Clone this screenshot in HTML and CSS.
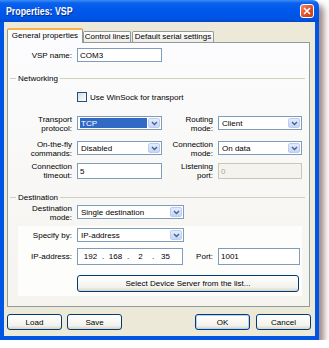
FILE: index.html
```html
<!DOCTYPE html>
<html lang="en">
<head>
  <meta charset="UTF-8">
  <title>Properties: VSP</title>
  <link rel="stylesheet" href="styles.css">
</head>
<body>
  <div class="window">
    <div class="titlebar">
      <span class="title">Properties: VSP</span>
      <span class="close">
        <svg width="8" height="8" viewBox="0 0 8 8"><path d="M1 1 L7 7 M7 1 L1 7" stroke="#fff" stroke-width="1.6"/></svg>
      </span>
    </div>
    <div class="client">
      <div class="tabs">
        <div class="tab active">General properties</div>
        <div class="tab">Control lines</div>
        <div class="tab">Default serial settings</div>
      </div>
      <div class="page">
        <div class="row name-row">
          <div class="lbl">VSP name:</div>
          <div class="edit w85">COM3</div>
        </div>

        <div class="group"><span>Networking</span></div>

        <div class="row check-row">
          <span class="check"></span>
          <span>Use WinSock for transport</span>
        </div>

        <div class="row pair first">
          <div class="lbl">Transport<br>protocol:</div>
          <div class="combo w85"><span class="val sel">TCP</span><span class="drop"><svg width="7" height="5" viewBox="0 0 7 5"><path d="M1 1 L3.5 3.5 L6 1" fill="none" stroke="#4d6185" stroke-width="1.4"/></svg></span></div>
          <div class="lbl rl">Routing<br>mode:</div>
          <div class="combo w84"><span class="val">Client</span><span class="drop"><svg width="7" height="5" viewBox="0 0 7 5"><path d="M1 1 L3.5 3.5 L6 1" fill="none" stroke="#4d6185" stroke-width="1.4"/></svg></span></div>
        </div>

        <div class="row pair">
          <div class="lbl">On-the-fly<br>commands:</div>
          <div class="combo w85"><span class="val">Disabled</span><span class="drop"><svg width="7" height="5" viewBox="0 0 7 5"><path d="M1 1 L3.5 3.5 L6 1" fill="none" stroke="#4d6185" stroke-width="1.4"/></svg></span></div>
          <div class="lbl rl">Connection<br>mode:</div>
          <div class="combo w84"><span class="val">On data</span><span class="drop"><svg width="7" height="5" viewBox="0 0 7 5"><path d="M1 1 L3.5 3.5 L6 1" fill="none" stroke="#4d6185" stroke-width="1.4"/></svg></span></div>
        </div>

        <div class="row pair tall">
          <div class="lbl">Connection<br>timeout:</div>
          <div class="edit w85">5</div>
          <div class="lbl rl">Listening<br>port:</div>
          <div class="edit w84 disabled">0</div>
        </div>

        <div class="group dest"><span>Destination</span></div>

        <div class="row pair mode-row">
          <div class="lbl">Destination<br>mode:</div>
          <div class="combo w107"><span class="val">Single destination</span><span class="drop"><svg width="7" height="5" viewBox="0 0 7 5"><path d="M1 1 L3.5 3.5 L6 1" fill="none" stroke="#4d6185" stroke-width="1.4"/></svg></span></div>
        </div>

        <div class="subpanel">
          <div class="row">
            <div class="lbl sub">Specify by:</div>
            <div class="combo w107"><span class="val">IP-address</span><span class="drop"><svg width="7" height="5" viewBox="0 0 7 5"><path d="M1 1 L3.5 3.5 L6 1" fill="none" stroke="#4d6185" stroke-width="1.4"/></svg></span></div>
          </div>
          <div class="row ip-row">
            <div class="lbl sub">IP-address:</div>
            <div class="edit ip">
              <span class="seg">192</span><span class="dot">.</span>
              <span class="seg">168</span><span class="dot">.</span>
              <span class="seg">2</span><span class="dot">.</span>
              <span class="seg">35</span>
            </div>
            <div class="lbl port">Port:</div>
            <div class="edit w82">1001</div>
          </div>
          <div class="btn wide">Select Device Server from the list...</div>
        </div>
      </div>

      <div class="buttons">
        <div class="btn-group">
          <div class="btn">Load</div>
          <div class="btn">Save</div>
        </div>
        <div class="btn-group">
          <div class="btn default">OK</div>
          <div class="btn">Cancel</div>
        </div>
      </div>
    </div>
  </div>
</body>
</html>
```

FILE: styles.css
```css
* {
  box-sizing: border-box;
}
body {
  margin: 0;
  background: #fff;
  font-family: "Liberation Sans", Arial, sans-serif;
  font-size: 8px;
  color: #000;
}
.window {
  width: 319px;
  height: 340px;
  display: flex;
  flex-direction: column;
  border-radius: 0 6px 0 0;
  box-shadow: 5px 5px 6px rgba(80, 40, 40, 0.55);
}
.titlebar {
  height: 22px;
  display: flex;
  align-items: center;
  justify-content: space-between;
  padding: 0 5px 0 6px;
  border-radius: 0 6px 0 0;
  background: linear-gradient(#3d8df7 0, #0a62ec 3px, #0058ee 45%, #0054e3 85%, #0047cf 100%);
}
.title {
  color: #fff;
  font-weight: bold;
  font-size: 11px;
  text-shadow: 1px 1px 0 #0a2a8a;
  display: inline-block;
  transform: scaleX(0.8);
  transform-origin: left center;
}
.close {
  width: 14px;
  height: 14px;
  border: 1px solid #fff;
  border-radius: 3px;
  background: linear-gradient(135deg, #f08a6a, #e0512a 50%, #c83c14);
  display: flex;
  align-items: center;
  justify-content: center;
}
.client {
  flex: 1;
  background: #ece9d8;
  border: 4px solid #0055e5;
  border-top: 0;
  padding: 5px 4px 0 3px;
  display: flex;
  flex-direction: column;
}
.tabs {
  height: 15px;
  display: flex;
  align-items: flex-end;
}
.tab {
  height: 11px;
  padding: 0;
  border: 1px solid #919b9c;
  border-bottom: 0;
  border-radius: 2px 2px 0 0;
  background: linear-gradient(#fff, #ecebe6);
  line-height: 10px;
  margin-right: 1px;
  white-space: nowrap;
  text-align: center;
}
.tab.active {
  height: 15px;
  border-top: 2px solid #f7b34a;
  background: #fcfcfe;
  line-height: 12px;
  position: relative;
  top: 1px;
  z-index: 1;
}
.tabs .tab:nth-child(2) { width: 48px; }
.tabs .tab:nth-child(3) { width: 82px; }
.tabs .tab.active { width: 76px; margin-right: 0; }
.page {
  width: 303px;
  height: 265px;
  border: 1px solid #919b9c;
  background: linear-gradient(#fcfcfe, #f4f3ee);
  padding-top: 5px;
}
.row {
  display: flex;
  align-items: center;
}
.lbl {
  width: 69px;
  padding-right: 5px;
  text-align: right;
  line-height: 9px;
}
.lbl.rl {
  width: 56px;
}
.lbl.sub {
  width: 59px;
}
.lbl.port {
  width: 35px;
}
.edit, .combo {
  height: 14px;
  border: 1px solid #7f9db9;
  background: #fff;
  padding-left: 2px;
  display: flex;
  align-items: center;
}
.w85 { width: 85px; }
.w84 { width: 84px; }
.w82 { width: 82px; }
.w107 { width: 107px; }
.edit.disabled {
  background: #f4f3ee;
  border-color: #c9c7ba;
  color: #aca899;
}
.combo {
  padding: 1px 1px 1px 2px;
  align-items: stretch;
}
.combo .val {
  flex: 1;
  display: flex;
  align-items: center;
  padding-left: 1px;
}
.combo .val.sel {
  background: #316ac5;
  color: #fff;
  margin-right: 1px;
}
.drop {
  width: 12px;
  border: 1px solid #b9cdf5;
  border-radius: 2px;
  background: linear-gradient(#e4ecfd, #c4d5f8);
  display: flex;
  align-items: center;
  justify-content: center;
}
.group {
  margin: 11px 4px 0 2px;
  height: 10px;
  display: flex;
  align-items: center;
}
.group::before {
  content: "";
  width: 6px;
  border-top: 1px solid #d0d0bf;
  margin-right: 2px;
}
.group::after {
  content: "";
  flex: 1;
  border-top: 1px solid #d0d0bf;
  margin-left: 2px;
}
.check-row {
  margin-top: 8px;
  height: 12px;
  padding-left: 69px;
}
.check {
  width: 10px;
  height: 10px;
  border: 1px solid #1c5180;
  background: linear-gradient(135deg, #dcdcd7, #fff);
  margin-right: 3px;
}
.pair {
  height: 18px;
  align-items: flex-start;
}
.pair .combo, .pair .edit {
  margin-top: 1px;
}
.pair.first {
  margin-top: 12px;
}
.pair + .pair {
  margin-top: 7px;
}
.pair.tall {
  margin-top: 4px;
}
.pair.tall .edit {
  height: 16px;
}
.group.dest {
  margin-top: 12px;
}
.pair.mode-row {
  margin-top: 2px;
}
.subpanel {
  margin: 4px 0 0 10px;
  width: 284px;
  height: 70px;
  background: #fdfdfb;
  padding-top: 2px;
}
.ip-row {
  margin-top: 6px;
}
.ip-row .edit {
  height: 17px;
}
.edit.ip {
  width: 106px;
  padding-left: 2px;
}
.seg {
  width: 21px;
  text-align: center;
}
.dot {
  width: 4px;
  text-align: center;
}
.btn {
  height: 16px;
  width: 55px;
  border: 1px solid #003c74;
  border-radius: 3px;
  background: linear-gradient(#fff, #f3f2ec 75%, #d8d2c6);
  display: flex;
  align-items: center;
  justify-content: center;
}
.btn.default {
  box-shadow: inset 0 0 0 1px #b8d0f5;
}
.btn.wide {
  width: 222px;
  height: 17px;
  margin: 10px 0 0 59px;
}
.buttons {
  margin-top: 7px;
  display: flex;
  justify-content: space-between;
}
.btn-group {
  display: flex;
  gap: 5px;
}
.btn-group + .btn-group {
  gap: 6px;
}
```
